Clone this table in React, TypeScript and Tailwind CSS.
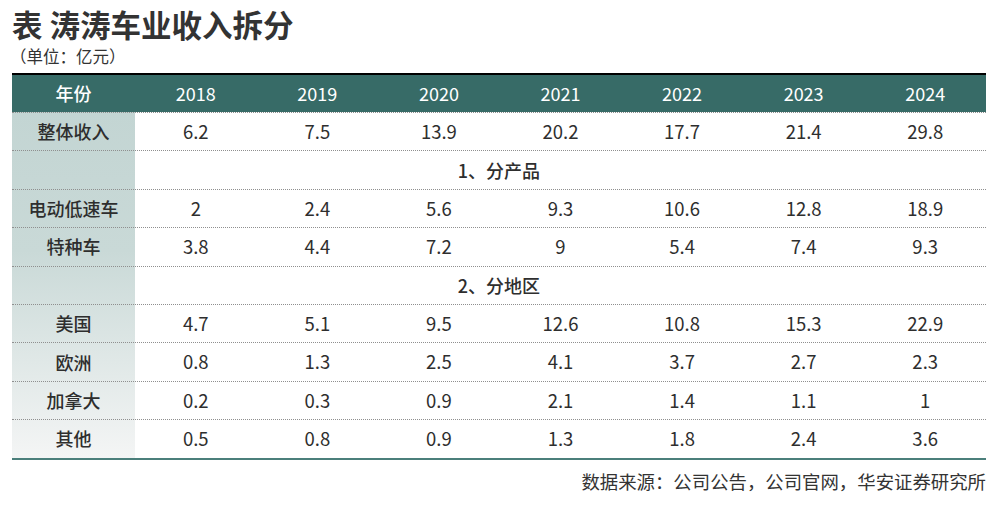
const years = ['2018', '2019', '2020', '2021', '2022', '2023', '2024']

type Row =
  | { kind: 'data'; label: string; values: string[] }
  | { kind: 'section'; label: string }

const rows: Row[] = [
  { kind: 'data', label: '整体收入', values: ['6.2', '7.5', '13.9', '20.2', '17.7', '21.4', '29.8'] },
  { kind: 'section', label: '1、分产品' },
  { kind: 'data', label: '电动低速车', values: ['2', '2.4', '5.6', '9.3', '10.6', '12.8', '18.9'] },
  { kind: 'data', label: '特种车', values: ['3.8', '4.4', '7.2', '9', '5.4', '7.4', '9.3'] },
  { kind: 'section', label: '2、分地区' },
  { kind: 'data', label: '美国', values: ['4.7', '5.1', '9.5', '12.6', '10.8', '15.3', '22.9'] },
  { kind: 'data', label: '欧洲', values: ['0.8', '1.3', '2.5', '4.1', '3.7', '2.7', '2.3'] },
  { kind: 'data', label: '加拿大', values: ['0.2', '0.3', '0.9', '2.1', '1.4', '1.1', '1'] },
  { kind: 'data', label: '其他', values: ['0.5', '0.8', '0.9', '1.3', '1.8', '2.4', '3.6'] },
]

const font = "font-['Noto_Sans_CJK_SC','Noto_Sans',sans-serif]"

export default function App() {
  return (
    <div className={`w-[999px] h-[509px] bg-white text-[#2e2e2e] ${font}`}>
      <div className="pl-3 pr-[13px] pt-[7px]">
        {/* Title */}
        <h1 className="text-[30.5px] font-bold leading-[34px] text-[#333333]">表 涛涛车业收入拆分</h1>
        <p className="-ml-[2px] mt-[5px] text-[16.5px] leading-[21px] text-[#333333]">（单位：亿元）</p>

        {/* Table */}
        <div className="mt-[6px] border-t-2 border-black">
          <div className="grid h-[37px] grid-cols-[123px_repeat(7,1fr)] items-center bg-[#376b67] text-[18px] text-white">
            <div className="text-center font-medium">年份</div>
            {years.map((y) => (
              <div key={y} className="text-center">
                {y}
              </div>
            ))}
          </div>

          <div className="bg-[linear-gradient(to_bottom,#c3d5d3,#c9d9d7_40%,#f4f5f5)] bg-[length:123px_100%] bg-no-repeat">
            {rows.map((row, i) =>
              row.kind === 'section' ? (
                <div
                  key={i}
                  className="flex h-[38.4px] items-center justify-center border-t border-dotted border-[#8f8f8f] text-[18px] font-medium"
                >
                  {row.label}
                </div>
              ) : (
                <div
                  key={i}
                  className="grid h-[38.4px] grid-cols-[123px_repeat(7,1fr)] items-center border-t border-dotted border-[#8f8f8f] text-[18.5px]"
                >
                  <div className="text-center text-[18px] font-medium">{row.label}</div>
                  {row.values.map((v, j) => (
                    <div key={j} className="text-center">
                      {v}
                    </div>
                  ))}
                </div>
              )
            )}
          </div>
          <div className="h-[2px] bg-[#4b7f7b]" />
        </div>

        {/* Source */}
        <p className="mt-[9px] text-right text-[18.4px] leading-[24px] text-[#333333]">
          数据来源：公司公告，公司官网，华安证券研究所
        </p>
      </div>
    </div>
  )
}
